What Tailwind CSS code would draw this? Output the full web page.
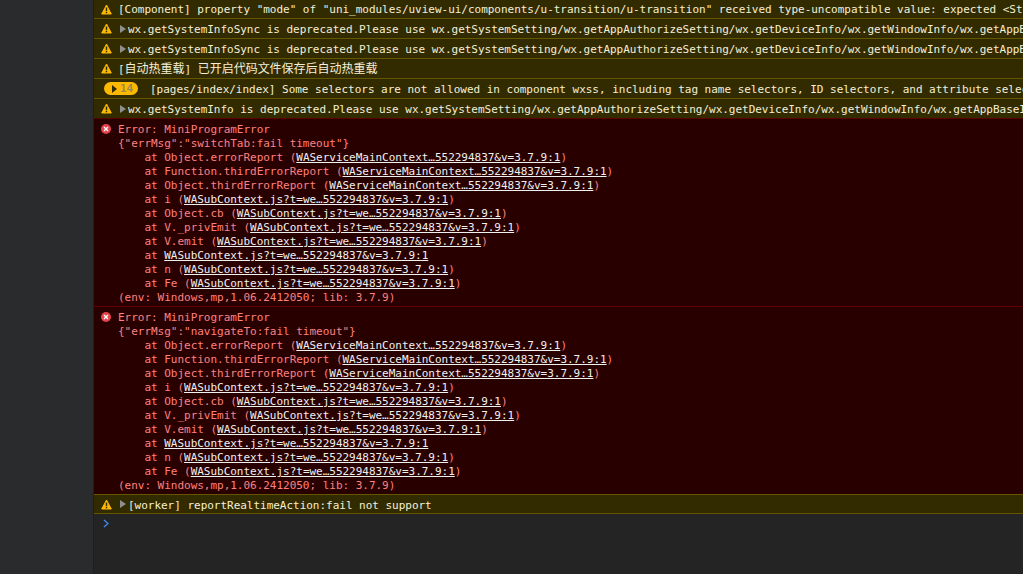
<!DOCTYPE html>
<html><head><meta charset="utf-8"><script src="https://cdn.jsdelivr.net/npm/@tailwindcss/browser@4"></script></head>
<body class="m-0 h-[574px] w-[1023px] overflow-hidden bg-[#242424] font-['DejaVu_Sans_Mono','Noto_Sans_CJK_SC',monospace] text-[11px] leading-[14px] tracking-[-0.02px]">
<div class="flex h-[574px]">
<div class="h-full w-[93px] shrink-0 bg-[#2a2b2d]"></div>
<div class="h-full w-[1px] shrink-0 bg-[#1e1e1e]"></div>
<div class="min-w-0 flex-1 overflow-hidden">

<div class="flex h-[19px] items-center whitespace-nowrap border-b border-[#665500] bg-[#332b00] pt-[2px] text-[#f5efd8]"><svg class="-mt-[2px] ml-[7px] mr-[6px] shrink-0" width="11" height="11" viewBox="0 0 11 11"><path d="M5.5 1 L10.3 10 H.7 Z" fill="#fdb900" stroke="#fdb900" stroke-linejoin="round"/><path d="M4.8 3.5h1.4v3.8H4.8zM4.8 8h1.4v1.3H4.8z" fill="#332b00"/></svg><span>[Component] property "mode" of "uni_modules/uview-ui/components/u-transition/u-transition" received type-uncompatible value: expected &lt;String&gt;</span></div>

<div class="flex h-[20px] items-center whitespace-nowrap border-b border-[#665500] bg-[#332b00] pt-[2px] text-[#f5efd8]"><svg class="-mt-[2px] ml-[7px] mr-[8px] shrink-0" width="11" height="11" viewBox="0 0 11 11"><path d="M5.5 1 L10.3 10 H.7 Z" fill="#fdb900" stroke="#fdb900" stroke-linejoin="round"/><path d="M4.8 3.5h1.4v3.8H4.8zM4.8 8h1.4v1.3H4.8z" fill="#332b00"/></svg><svg class="-mt-[2px] mr-[2px] shrink-0" width="6" height="8" viewBox="0 0 6 8"><path d="M0 0 L6 4 L0 8 Z" fill="#8f8f8f"/></svg><span>wx.getSystemInfoSync is deprecated.Please use wx.getSystemSetting/wx.getAppAuthorizeSetting/wx.getDeviceInfo/wx.getWindowInfo/wx.getAppBaseInfo instead.</span></div>

<div class="flex h-[20px] items-center whitespace-nowrap border-b border-[#665500] bg-[#332b00] pt-[2px] text-[#f5efd8]"><svg class="-mt-[2px] ml-[7px] mr-[8px] shrink-0" width="11" height="11" viewBox="0 0 11 11"><path d="M5.5 1 L10.3 10 H.7 Z" fill="#fdb900" stroke="#fdb900" stroke-linejoin="round"/><path d="M4.8 3.5h1.4v3.8H4.8zM4.8 8h1.4v1.3H4.8z" fill="#332b00"/></svg><svg class="-mt-[2px] mr-[2px] shrink-0" width="6" height="8" viewBox="0 0 6 8"><path d="M0 0 L6 4 L0 8 Z" fill="#8f8f8f"/></svg><span>wx.getSystemInfoSync is deprecated.Please use wx.getSystemSetting/wx.getAppAuthorizeSetting/wx.getDeviceInfo/wx.getWindowInfo/wx.getAppBaseInfo instead.</span></div>

<div class="flex h-[20px] items-center whitespace-nowrap border-b border-[#665500] bg-[#332b00] pt-[2px] text-[#f5efd8]"><svg class="-mt-[2px] ml-[7px] mr-[6px] shrink-0" width="11" height="11" viewBox="0 0 11 11"><path d="M5.5 1 L10.3 10 H.7 Z" fill="#fdb900" stroke="#fdb900" stroke-linejoin="round"/><path d="M4.8 3.5h1.4v3.8H4.8zM4.8 8h1.4v1.3H4.8z" fill="#332b00"/></svg><span>[<span class="text-[12px]">自动热重载</span>] <span class="text-[12px]">已开启代码文件保存后自动热重载</span></span></div>

<div class="flex h-[20px] items-center whitespace-nowrap border-b border-[#665500] bg-[#332b00] pt-[2px] text-[#f5efd8]"><div class="-mt-[2px] ml-[10px] mr-[12px] flex h-[13px] w-[34px] shrink-0 items-center rounded-full bg-[#fdb900] pl-[8px] text-[#9a8a50]"><svg class="mr-[3px] shrink-0" width="5" height="8" viewBox="0 0 5 8"><path d="M0 0 L5 4 L0 8 Z" fill="#332b00"/></svg><span class="font-bold">14</span></div><span>[pages/index/index] Some selectors are not allowed in component wxss, including tag name selectors, ID selectors, and attribute selectors.</span></div>

<div class="flex h-[20px] items-center whitespace-nowrap border-b border-[#5c0000] bg-[#332b00] pt-[2px] text-[#f5efd8]"><svg class="-mt-[2px] ml-[7px] mr-[8px] shrink-0" width="11" height="11" viewBox="0 0 11 11"><path d="M5.5 1 L10.3 10 H.7 Z" fill="#fdb900" stroke="#fdb900" stroke-linejoin="round"/><path d="M4.8 3.5h1.4v3.8H4.8zM4.8 8h1.4v1.3H4.8z" fill="#332b00"/></svg><svg class="-mt-[2px] mr-[2px] shrink-0" width="6" height="8" viewBox="0 0 6 8"><path d="M0 0 L6 4 L0 8 Z" fill="#8f8f8f"/></svg><span>wx.getSystemInfo is deprecated.Please use wx.getSystemSetting/wx.getAppAuthorizeSetting/wx.getDeviceInfo/wx.getWindowInfo/wx.getAppBaseInfo instead.</span></div>

<div class="flex h-[188px] whitespace-pre border-b border-[#660000] bg-[#290000] pt-[4px] text-[#ff8080]">
<svg class="ml-[7px] mr-[7px] mt-[1px] shrink-0" width="10" height="10" viewBox="0 0 10 10"><circle cx="5" cy="5" r="5" fill="#e4434b"/><path d="M3 3 L7 7 M7 3 L3 7" stroke="#fff" stroke-width="1.4"/></svg>
<div class="flex flex-col">
<div>Error: MiniProgramError</div>
<div>{"errMsg":"switchTab:fail timeout"}</div>
<div>    at Object.errorReport (<span class="text-[#f0f0f0] underline">WAServiceMainContext…552294837&amp;v=3.7.9:1</span>)</div>
<div>    at Function.thirdErrorReport (<span class="text-[#f0f0f0] underline">WAServiceMainContext…552294837&amp;v=3.7.9:1</span>)</div>
<div>    at Object.thirdErrorReport (<span class="text-[#f0f0f0] underline">WAServiceMainContext…552294837&amp;v=3.7.9:1</span>)</div>
<div>    at i (<span class="text-[#f0f0f0] underline">WASubContext.js?t=we…552294837&amp;v=3.7.9:1</span>)</div>
<div>    at Object.cb (<span class="text-[#f0f0f0] underline">WASubContext.js?t=we…552294837&amp;v=3.7.9:1</span>)</div>
<div>    at V._privEmit (<span class="text-[#f0f0f0] underline">WASubContext.js?t=we…552294837&amp;v=3.7.9:1</span>)</div>
<div>    at V.emit (<span class="text-[#f0f0f0] underline">WASubContext.js?t=we…552294837&amp;v=3.7.9:1</span>)</div>
<div>    at <span class="text-[#f0f0f0] underline">WASubContext.js?t=we…552294837&amp;v=3.7.9:1</span></div>
<div>    at n (<span class="text-[#f0f0f0] underline">WASubContext.js?t=we…552294837&amp;v=3.7.9:1</span>)</div>
<div>    at Fe (<span class="text-[#f0f0f0] underline">WASubContext.js?t=we…552294837&amp;v=3.7.9:1</span>)</div>
<div>(env: Windows,mp,1.06.2412050; lib: 3.7.9)</div>
</div></div>

<div class="flex h-[188px] whitespace-pre border-b border-[#665500] bg-[#290000] pt-[4px] text-[#ff8080]">
<svg class="ml-[7px] mr-[7px] mt-[1px] shrink-0" width="10" height="10" viewBox="0 0 10 10"><circle cx="5" cy="5" r="5" fill="#e4434b"/><path d="M3 3 L7 7 M7 3 L3 7" stroke="#fff" stroke-width="1.4"/></svg>
<div class="flex flex-col">
<div>Error: MiniProgramError</div>
<div>{"errMsg":"navigateTo:fail timeout"}</div>
<div>    at Object.errorReport (<span class="text-[#f0f0f0] underline">WAServiceMainContext…552294837&amp;v=3.7.9:1</span>)</div>
<div>    at Function.thirdErrorReport (<span class="text-[#f0f0f0] underline">WAServiceMainContext…552294837&amp;v=3.7.9:1</span>)</div>
<div>    at Object.thirdErrorReport (<span class="text-[#f0f0f0] underline">WAServiceMainContext…552294837&amp;v=3.7.9:1</span>)</div>
<div>    at i (<span class="text-[#f0f0f0] underline">WASubContext.js?t=we…552294837&amp;v=3.7.9:1</span>)</div>
<div>    at Object.cb (<span class="text-[#f0f0f0] underline">WASubContext.js?t=we…552294837&amp;v=3.7.9:1</span>)</div>
<div>    at V._privEmit (<span class="text-[#f0f0f0] underline">WASubContext.js?t=we…552294837&amp;v=3.7.9:1</span>)</div>
<div>    at V.emit (<span class="text-[#f0f0f0] underline">WASubContext.js?t=we…552294837&amp;v=3.7.9:1</span>)</div>
<div>    at <span class="text-[#f0f0f0] underline">WASubContext.js?t=we…552294837&amp;v=3.7.9:1</span></div>
<div>    at n (<span class="text-[#f0f0f0] underline">WASubContext.js?t=we…552294837&amp;v=3.7.9:1</span>)</div>
<div>    at Fe (<span class="text-[#f0f0f0] underline">WASubContext.js?t=we…552294837&amp;v=3.7.9:1</span>)</div>
<div>(env: Windows,mp,1.06.2412050; lib: 3.7.9)</div>
</div></div>

<div class="flex h-[19px] items-center whitespace-nowrap border-b border-[#665500] bg-[#332b00] pt-[4px] text-[#f5efd8]"><svg class="-mt-[4px] ml-[7px] mr-[8px] shrink-0" width="11" height="11" viewBox="0 0 11 11"><path d="M5.5 1 L10.3 10 H.7 Z" fill="#fdb900" stroke="#fdb900" stroke-linejoin="round"/><path d="M4.8 3.5h1.4v3.8H4.8zM4.8 8h1.4v1.3H4.8z" fill="#332b00"/></svg><svg class="-mt-[4px] mr-[2px] shrink-0" width="6" height="8" viewBox="0 0 6 8"><path d="M0 0 L6 4 L0 8 Z" fill="#8f8f8f"/></svg><span>[worker] reportRealtimeAction:fail not support</span></div>

<div class="pl-[9px] pt-[5px]"><svg width="6" height="9" viewBox="0 0 6 9"><path d="M1 1 L5 4.5 L1 8" fill="none" stroke="#3f86e8" stroke-width="1.5"/></svg></div>
</div></div>
</body></html>
